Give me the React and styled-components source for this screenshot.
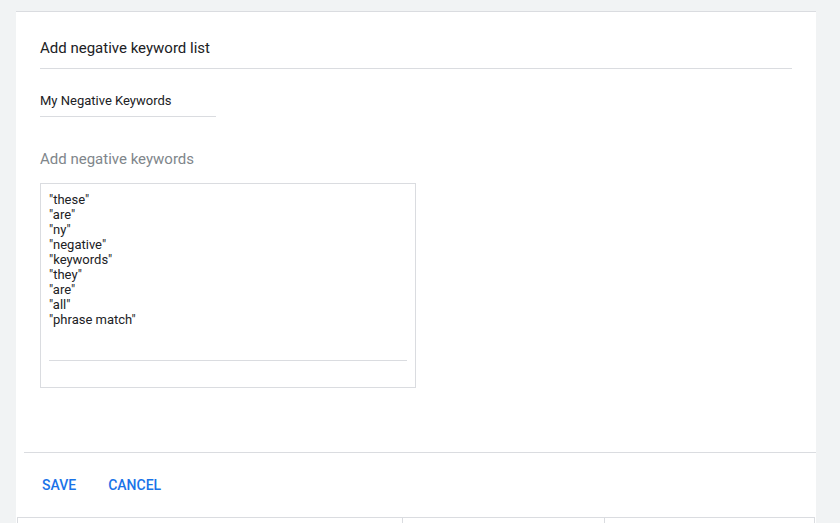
import React from "react";
import styled, { createGlobalStyle } from "styled-components";

const Global = createGlobalStyle`
  html, body { margin: 0; padding: 0; background: #f1f3f4; }
  body { font-family: Roboto, "Noto Sans", Arial, sans-serif; color: #202124; }
  * { box-sizing: border-box; }
`;

const Page = styled.div`
  min-height: 100vh;
  padding: 11px 0 0 16px;
`;

const Card = styled.div`
  width: 800px;
  background: #fff;
  border-top: 1px solid #dadce0;
`;

const Body = styled.div`
  padding: 0 24px;
`;

const Header = styled.div`
  padding: 26px 0 10px;
  border-bottom: 1px solid #dadce0;
`;

const Title = styled.div`
  font-size: 15px;
  line-height: 20px;
  font-weight: 400;
`;

const NameField = styled.div`
  margin-top: 24px;
  width: 176px;
  padding-bottom: 7px;
  border-bottom: 1px solid #dadce0;
  font-size: 13px;
  line-height: 16px;
`;

const SectionLabel = styled.div`
  margin-top: 32px;
  font-size: 15px;
  line-height: 20px;
  color: #80868b;
`;

const KeywordBox = styled.div`
  margin-top: 14px;
  width: 376px;
  height: 205px;
  border: 1px solid #dadce0;
  padding: 8px 8px 0;
`;

const KeywordList = styled.div`
  height: 169px;
  border-bottom: 1px solid #dadce0;
  font-size: 13px;
  line-height: 15px;
`;

const Footer = styled.div`
  margin: 64px 0 0 8px;
  border-top: 1px solid #dadce0;
  height: 65px;
  display: flex;
  align-items: center;
  padding: 0 10px;
  gap: 16px;
`;

const TextButton = styled.button`
  border: none;
  background: none;
  padding: 8px;
  font-family: Roboto, Arial, sans-serif;
  font-size: 14px;
  font-weight: 500;
  line-height: 16px;
  color: #1a73e8;
  text-transform: uppercase;
  cursor: pointer;
`;

const Table = styled.div`
  margin: 0 1px;
  display: grid;
  grid-template-columns: 384px 202px 1fr;
  border: 1px solid #dadce0;
  border-bottom: none;
`;

const Cell = styled.div`
  height: 60px;
  border-left: ${(p) => (p.$first ? "none" : "1px solid #dadce0")};
`;

const keywords = [
  '"these"',
  '"are"',
  '"ny"',
  '"negative"',
  '"keywords"',
  '"they"',
  '"are"',
  '"all"',
  '"phrase match"',
];

export default function App() {
  return (
    <>
      <Global />
      <Page>
        <Card>
          <Body>
            <Header>
              <Title>Add negative keyword list</Title>
            </Header>
            <NameField>My Negative Keywords</NameField>
            <SectionLabel>Add negative keywords</SectionLabel>
            <KeywordBox>
              <KeywordList>
                {keywords.map((k, i) => (
                  <div key={i}>{k}</div>
                ))}
              </KeywordList>
            </KeywordBox>
          </Body>
          <Footer>
            <TextButton>Save</TextButton>
            <TextButton>Cancel</TextButton>
          </Footer>
          <Table>
            <Cell $first />
            <Cell />
            <Cell />
          </Table>
        </Card>
      </Page>
    </>
  );
}
